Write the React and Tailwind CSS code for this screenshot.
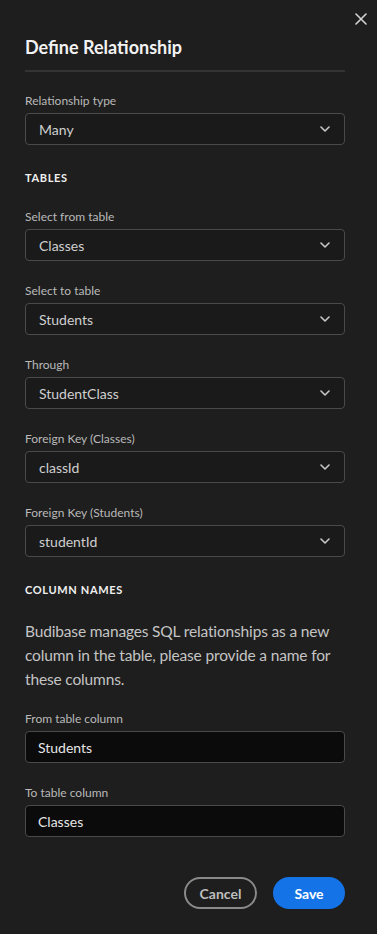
import React from 'react';

const font = { fontFamily: '"Source Sans Pro", Lato, "Noto Sans", sans-serif' };

const Chevron = () => (
  <svg width="10" height="6" viewBox="0 0 10 6" fill="none" className="shrink-0">
    <path d="M1 1l4 4 4-4" stroke="#c8c8c8" strokeWidth="1.6" strokeLinecap="round" strokeLinejoin="round" />
  </svg>
);

const Label = ({ children }) => (
  <div className="text-[12px] leading-[15px] text-[#b9b9b9] mb-[5px]">{children}</div>
);

const Select = ({ label, value }) => (
  <div>
    <Label>{label}</Label>
    <div className="h-[32px] flex items-center justify-between pl-[13px] pr-[14px] rounded-[4px] border border-[#4a4a4a] bg-[#1a1a1a]">
      <span className="text-[14px] text-[#cfcfcf]">{value}</span>
      <Chevron />
    </div>
  </div>
);

const TextInput = ({ label, value }) => (
  <div>
    <Label>{label}</Label>
    <div className="h-[32px] flex items-center pl-[12px] rounded-[4px] border border-[#4a4a4a] bg-[#0b0b0b]">
      <span className="text-[14px] text-[#e6e6e6]">{value}</span>
    </div>
  </div>
);

const SectionTitle = ({ children }) => (
  <div className="text-[11px] font-bold tracking-[0.06em] text-[#f0f0f0] leading-[14px]">{children}</div>
);

export default function App() {
  return (
    <div className="min-h-[934px] w-[377px] bg-[#1e1e1e] relative" style={font}>
      <button className="absolute top-[12px] right-[9px] p-[1px] text-[#d4d4d4]">
        <svg width="12" height="12" viewBox="0 0 12 12">
          <path d="M1 1l10 10M11 1L1 11" stroke="currentColor" strokeWidth="1.6" strokeLinecap="round" />
        </svg>
      </button>

      <div className="px-[25px] pt-[35px] w-[370px]">
        <h1 className="text-[18px] leading-[24px] font-bold text-[#f2f2f2]">Define Relationship</h1>
        <div className="h-[2px] bg-[#343434] mt-[11px] w-[320px]" />

        <div className="w-[320px] mt-[21px] flex flex-col">
          <Select label="Relationship type" value="Many" />

          <div className="mt-[26px]">
            <SectionTitle>TABLES</SectionTitle>
          </div>

          <div className="mt-[24px] flex flex-col gap-[22px]">
            <Select label="Select from table" value="Classes" />
            <Select label="Select to table" value="Students" />
            <Select label="Through" value="StudentClass" />
            <Select label="Foreign Key (Classes)" value="classId" />
            <Select label="Foreign Key (Students)" value="studentId" />
          </div>

          <div className="mt-[26px]">
            <SectionTitle>COLUMN NAMES</SectionTitle>
          </div>

          <p className="mt-[22px] text-[15.5px] tracking-[-0.01em] leading-[24px] text-[#c4c4c4]">
            Budibase manages SQL relationships as a new column in the table, please provide a name for these columns.
          </p>

          <div className="mt-[20px] flex flex-col gap-[22px]">
            <TextInput label="From table column" value="Students" />
            <TextInput label="To table column" value="Classes" />
          </div>

          <div className="mt-[40px] flex justify-end gap-[16px]">
            <button className="h-[32px] w-[73px] rounded-full border-2 border-[#8a8a8a] text-[14px] font-bold text-[#bdbdbd]">
              Cancel
            </button>
            <button className="h-[32px] w-[72px] rounded-full bg-[#1473e6] text-[14px] font-bold text-white">
              Save
            </button>
          </div>
        </div>
      </div>
    </div>
  );
}
